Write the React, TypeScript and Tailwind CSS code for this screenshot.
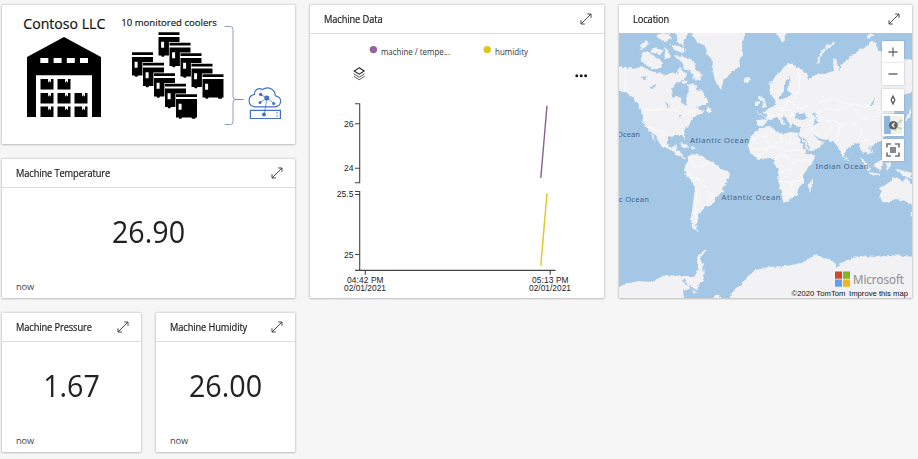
import type { ReactNode } from "react";

const uiFont = "font-['Open_Sans','Noto_Sans',sans-serif]";

function ExpandIcon() {
  return (
    <svg className="h-3 w-3 shrink-0" viewBox="0 0 12 12" fill="none" stroke="#333" strokeWidth="0.9">
      <path d="M1.2 10.8 10.8 1.2M7.2 1h3.8v3.8M1 7.2V11h3.8" />
    </svg>
  );
}

function Card({ title, className, children }: { title?: string; className: string; children: ReactNode }) {
  return (
    <section className={`flex shrink-0 flex-col overflow-hidden rounded-[1px] bg-white shadow-[0_0_2px_1px_rgba(0,0,0,0.13),0_1px_2px_rgba(0,0,0,0.12)] ${className}`}>
      {title && (
        <header className="flex h-[29px] shrink-0 items-center justify-between border-b border-[#dedede] pr-[12px] pl-[14px]">
          <h2 className="w-0 origin-left scale-x-[0.885] pt-[2px] text-[10.5px] font-normal tracking-[-0.12px] whitespace-nowrap text-[#1c1c1c] [-webkit-text-stroke:0.2px_#1c1c1c]">{title}</h2>
          <ExpandIcon />
        </header>
      )}
      {children}
    </section>
  );
}

function Metric({ title, value, className }: { title: string; value: string; className: string }) {
  return (
    <Card title={title} className={className}>
      <div className="flex flex-1 flex-col">
        <div className="flex h-[87px] scale-x-[0.925] items-center justify-center text-[31px] leading-none text-[#222]">{value}</div>
        <div className="pt-[5px] pl-[14px] text-[9.3px] leading-[14px] tracking-[-0.1px] text-[#444]">now</div>
      </div>
    </Card>
  );
}

const rearCoolers = [[158.5, 32], [169.5, 42.5], [180.5, 53], [191.5, 63.5], [202.5, 74]];
const frontCoolers = [[132, 52], [143, 62.5], [154, 73], [165, 83.5], [176, 94]];

function Cooler({ x, y }: { x: number; y: number }) {
  return (
    <g transform={`translate(${x} ${y})`}>
      <path d="M-.6-.6h22.2v5H22V24H-.6z" fill="#fff" />
      <path d="M0 .3h21v2.6H0zM0 5h21v18.5h-1.2l-.7 1.2h-3l-.7-1.2H6l-.7 1.2h-2l-.7-1.2H0z" fill="#000" />
      <path d="M2.6 9.7h3v6h-3z" fill="#fff" />
    </g>
  );
}

const boxes = [[40.5, 79], [57.5, 79], [40.5, 93], [57.5, 93], [74.5, 93], [40.5, 106.5], [57.5, 106.5], [74.5, 106.5]];

function SiteDiagram() {
  return (
    <svg className="h-[139px] w-[293px]" viewBox="2 5 293 139">
      <text x="23.3" y="28.7" fontSize="14" textLength="82" lengthAdjust="spacingAndGlyphs" fill="#111" stroke="#111" strokeWidth=".2">Contoso LLC</text>
      <text x="121.3" y="25.8" fontSize="9.8" textLength="95.5" lengthAdjust="spacingAndGlyphs" fill="#111" stroke="#111" strokeWidth=".15">10 monitored coolers</text>
      <path d="M27 57 64 37l37 20v60h-9V75.2H36V117h-9z" fill="#000" />
      <path d="M40.3 58h8v5h-8zm13.3 0h8v5h-8zm13.2 0h8v5h-8zm13.2 0h8v5h-8z" fill="#fff" />
      {boxes.map(([x, y]) => (
        <path key={`${x}-${y}`} transform={`translate(${x} ${y})`} d="M0 0h7.6v3.3h1V2.3h1v1h.9V0H13v10.4H0z" fill="#000" />
      ))}
      {rearCoolers.map(([x, y]) => <Cooler key={x} x={x} y={y} />)}
      {frontCoolers.map(([x, y]) => <Cooler key={x} x={x} y={y} />)}
      <path d="M224.5 26.5h6q2.5 0 2.5 2.5v67.5q0 3 2.5 3h8h-8q-2.5 0-2.5 3V122q0 2.5-2.5 2.5h-6" fill="none" stroke="#6f86c4" strokeWidth=".8" />
      <g fill="none" stroke="#4472c4" strokeWidth="1.2">
        <path d="M255 106.8h19.5c7.5 0 8.5-10 .8-11 0-6-7-10.5-12.8-6.2-4.500-2.500-8.200.8-8.200 4.800-7 1.500-7 11.900.7 12.400z" />
        <path d="M250.400 110.300h30v8.200h-30z" />
        <path d="m260.500 94.500 6.500 3.500 7 5.500M260 102.500l7-4.500-2.800 16.500" strokeWidth=".7" />
      </g>
      <g fill="#4472c4">
        <circle cx="266.800" cy="98" r="2.500" />
        <circle cx="260.700" cy="94.500" r="1.700" />
        <circle cx="260" cy="102.500" r="1.500" />
        <circle cx="273.700" cy="103.500" r="1.600" />
        <circle cx="264" cy="114.500" r="2" />
        <path d="M276.500 112.300h1.200v1.200h-1.200zm0 3h1.200v1.200h-1.200z" />
      </g>
    </svg>
  );
}

function MachineChart() {
  return (
    <svg className="h-[264px] w-[294px]" viewBox="310 34 294 264">
      <circle cx="373.400" cy="49.600" r="3.700" fill="#93639a" />
      <circle cx="487.200" cy="49.600" r="3.700" fill="#dfc51e" />
      <g fontSize="8.300" fill="#333">
        <text x="381" y="54.500" textLength="69" lengthAdjust="spacingAndGlyphs">machine / tempe...</text>
        <text x="495" y="54.500" textLength="33" lengthAdjust="spacingAndGlyphs">humidity</text>
      </g>
      <g fill="none" stroke="#222" strokeWidth="1.100">
        <path d="m359.200 67.800 5 3.200-5 3.200-5-3.200z" />
        <path d="m353.800 73.800 5.400 3.400 5.400-3.400M353.800 76.300l5.400 3.400 5.400-3.400" strokeWidth=".75" />
      </g>
      <g fill="#1a1a1a"><circle cx="576.800" cy="75.700" r="1.500" /><circle cx="581.200" cy="75.700" r="1.500" /><circle cx="585.600" cy="75.700" r="1.500" /></g>
      <path d="M355 103.700h4.700v79H355M355 123.700h4.700M355 168.200h4.700M355 191.500h4.700v78.800M355 194.500h4.700M355 254.500h4.700M355 270.400h200.500M365.300 270.400v4.300M550.200 270.400v4.300" fill="none" stroke="#444" strokeWidth="1.100" />
      <path d="m540.800 178 6.200-72.300" stroke="#876090" strokeWidth="1.400" />
      <path d="m540.800 265.500 6.200-72.300" stroke="#dfc92d" strokeWidth="1.500" />
      <g fontFamily="Liberation Sans, sans-serif" fontSize="8.600" fill="#222" textAnchor="end">
        <text x="353.500" y="127">26</text>
        <text x="353.500" y="171.400">24</text>
        <text x="353.500" y="197.300">25.5</text>
        <text x="353.500" y="257.500">25</text>
      </g>
      <g fontFamily="Liberation Sans, sans-serif" fontSize="8.400" fill="#222" textAnchor="middle">
        <text x="365.300" y="283" textLength="36.500">04:42 PM</text>
        <text x="365" y="291.400" textLength="42">02/01/2021</text>
        <text x="550.300" y="283" textLength="36.500">05:13 PM</text>
        <text x="550" y="291.400" textLength="42">02/01/2021</text>
      </g>
    </svg>
  );
}

const continents = [
  // North and Central America
  "M615 66 625 67 635 69 642 66 648 70 658 73 667 75 671 72 677 74 680 65 682 71 687 74 685 79 677 83 671 90 672 96 681 98 684 106 687 103 686 97 689 90 688 83 695 85 698 91 702 90 705 97 709 102 703 106 696 107 700 110 705 111 698 115 692 119 689 125 684 131 686 140 682 135 673 135 668 138 668 146 671 148 677 144 676 150 680 152 682 157 687 157 683 159 677 154 670 150 662 147 657 139 648 128 643 122 641 110 638 103 628 94 615 89z",
  // Baja California
  "M651 133 655 139 656 142 652 137z",
  // Greenland
  "M689 29 692 34 697 42 704 45 708 55 713 61 712 68 715 80 718 86 721 89 724 79 732 72 740 66 739 60 743 55 742 46 746 29z",
  // Iceland
  "M743 78 749 77 751 80 747 83 744 82z",
  // Canadian Arctic
  "M641 54 647 51 653 55 658 59 663 63 661 69 653 69 647 66 641 62z",
  "M640 45 646 40 649 43 646 48 641 50z",
  "M651 49 657 47 663 51 660 54 653 53z",
  "M664 48 669 50 670 58 665 59z",
  "M656 36 662 33 670 34 671 39 665 42 661 40z",
  "M670 44 678 46 686 49 683 52 674 50z",
  "M675 29 690 29 685 39 683 46 677 43z",
  "M674 55 685 57 694 62 696 69 702 75 700 81 694 79 691 72 684 68 682 62 676 59z",
  "M681 82 686 80 687 83 683 84z",
  "M708 106 712 112 706 112z",
  // Caribbean
  "M679 143 687 145 690 148 684 147z", "M691 147 697 149 692 150z",
  // South America
  "M687 158 693 154 703 156 713 162 718 167 730 173 729 178 724 185 723 192 715 198 712 205 705 207 702 212 698 215 698 220 695 225 699 232 692 228 691 218 693 203 695 187 688 178 684 170 687 163z",
  // Africa
  "M760 128 772 127 776 131 783 134 790 132 798 133 799 139 805 150 808 154 816 154 813 162 803 175 804 183 798 188 797 195 787 202 783 201 780 187 778 180 779 172 774 163 774 158 768 158 758 160 750 152 748 145 752 135z",
  "M813 179 813 183 810 192 808 188 809 184z",
  // Eurasia
  "M757 120 757 126 763 126 768 120 774 118 778 117 784 126 786 124 781 117 784 116 789 123 790 128 793 123 797 127 801 126 799 134 808 153 818 148 824 142 818 140 813 134 820 139 833 141 838 147 843 158 846 151 852 145 858 143 862 153 865 150 869 156 871 152 869 147 873 145 882 140 887 131 886 124 882 120 889 118 893 124 896 122 892 115 900 104 902 96 916 91 916 60 898 59 885 53 878 50 876 44 872 40 868 45 855 53 847 60 842 64 839 71 836 58 833 58 834 71 827 73 815 75 808 80 807 73 798 67 788 63 778 73 770 83 770 94 774 96 776 104 771 107 763 112 767 115 766 119z",
  "M760 94 764 99 767 107 762 108 763 103 759 99z", "M755 102 759 101 758 106 755 106z",
  "M776 29 789 29 783 42 780 40z", "M866 35 872 33 874 36 868 38z",
  "M846 157 848 161 845 160z",
  // South-east Asia and Australia
  "M860 157 864 160 871 169 869 171 864 165z", "M869 172 880 174 880 176 870 174z",
  "M874 164 881 160 884 163 880 170 875 168z", "M886 163 891 162 888 171z",
  "M894 168 901 170 911 174 912 179 904 176z",
  "M879 188 888 184 894 177 900 179 902 184 906 177 911 184 916 190 916 207 905 201 896 199 883 203 879 198 881 192z",
  "M909 211 914 213 911 217z",
  // Japan
  "M908 113 911 108 910 117 905 121z",
  // Antarctica
  "M615 288 625 284 638 281 652 282 657 279 665 275 682 276 695 276 698 269 697 258 703 251 708 248 700 258 703 265 704 278 699 285 696 294 691 288 683 291 685 303 615 303z",
  "M709 303 718 293 724 303z",
  "M726 303 735 289 742 283 755 270 770 267 785 266 802 263 817 254 823 258 833 260 836 268 842 262 858 256 878 257 889 255 916 257 916 303z",
];

const inlandWater = [
  "M795 119 796 113 800 114 804 113 808 118 803 120z",
  "M812 114 817 113 815 117 818 124 814 124 815 118z",
  "M784 91 784 84 790 76 789 83 787 90 791 93 788 97 779 100 781 95z",
  "M799 134 810 155 807 154z",
  "M640 77 648 76 645 80z", "M649 87 656 85 653 88z", "M665 101 668 104 669 108 667 106z", "M679 116 681 113 680 119z",
  "M870 105 875 98 873 105z", "M831 106 835 101 832 105z",
];

const borders = [
  "M625 67V91M641 110H675L684 115 696 110M648 128 659 130 667 136M663 147 670 143M690 157 693 167 702 166 710 163M684 174 697 177 705 187 712 193 707 203M697 190 695 212 698 228",
  "M751 142 760 135 772 146 781 141 793 143 799 140M750 150 764 149 772 146 785 151 796 150 805 153M760 157 768 149M774 160 782 155 793 161 805 160 811 163M779 171 791 171 793 163 804 174M779 181 791 183 804 179M782 194 793 195 791 183 800 177M781 132V143M790 133V145M770 130 765 139",
  "M757 112 766 117 778 114 784 118 793 115 790 109 780 111 773 104M784 104 791 101 799 109 809 106 816 113 826 109 837 110 847 106 858 111 871 105 881 110 893 103M778 109 785 107 790 99M790 66 800 76 799 91 794 97M809 121 821 123 833 120 841 126 850 120 862 131 857 142M822 117 831 127 825 139M808 124 818 136M841 127 836 140M851 108 864 119 877 116 889 107M818 103 833 99 849 104 869 106M862 137 870 143 873 153",
];

function WorldMap() {
  return (
    <svg className="h-[265px] w-[293px]" viewBox="619 33 293 265">
      <defs>
        <filter id="coast" x="611" y="25" width="309" height="281" filterUnits="userSpaceOnUse" colorInterpolationFilters="sRGB">
          <feTurbulence type="fractalNoise" baseFrequency="0.24" numOctaves="2" seed="7" result="noise" />
          <feDisplacementMap in="SourceGraphic" in2="noise" scale="4" xChannelSelector="R" yChannelSelector="G" />
        </filter>
      </defs>
      <rect x="619" y="33" width="293" height="265" fill="#a5c7e6" />
      <g filter="url(#coast)">
        {continents.map((d) => <path key={d} d={d} fill="#f2f2f4" />)}
        {borders.map((d) => <path key={d} d={d} fill="none" stroke="#fff" strokeWidth=".7" />)}
        {inlandWater.map((d) => <path key={d} d={d} fill="#a5c7e6" />)}
        <path d="M818.500 63.500q-1-6 3-10t6-7l6-3" fill="none" stroke="#f2f2f4" strokeWidth="2" />
        <path d="M804 137 811 153M683 280l4 5M689 286l8 6M695 262l-2 8M638 276l8 1" fill="none" stroke="#a5c7e6" strokeWidth="1.500" />
      </g>
      <g fontFamily="Noto Sans, Open Sans, sans-serif" fontSize="7.600" fill="#42638b">
        <text x="617" y="136.700" textLength="23">Ocean</text>
        <text x="619" y="201.500" textLength="30">c Ocean</text>
        <text x="690" y="143.200" textLength="59">Atlantic Ocean</text>
        <text x="721.500" y="199.800" textLength="59">Atlantic Ocean</text>
        <text x="815.500" y="168.700" textLength="53">Indian Ocean</text>
      </g>
      <path d="M835 271.500h7v7.200h-7z" fill="#cf4b27" />
      <path d="M843 271.500h7v7.200h-7z" fill="#84b522" />
      <path d="M835 279.600h7v7.200h-7z" fill="#659eea" />
      <path d="M843 279.600h7v7.200h-7z" fill="#f2b51e" />
      <text x="853" y="284.200" fontSize="12.800" textLength="51" lengthAdjust="spacingAndGlyphs" fill="#929292" stroke="#929292" strokeWidth=".2">Microsoft</text>
      <g fontFamily="Liberation Sans, sans-serif" fontSize="7.700" fill="#111">
        <text x="791.500" y="296.300" textLength="54">©2020 TomTom</text>
        <text x="849" y="296.300" textLength="59">Improve this map</text>
      </g>
    </svg>
  );
}

function MapButton({ label, children, className = "" }: { label: string; children: ReactNode; className?: string }) {
  return (
    <button aria-label={label} className={`flex h-[22px] w-[22px] items-center justify-center bg-white shadow-[0_0_2px_rgba(0,0,0,0.25)] ${className}`}>
      {children}
    </button>
  );
}

function MapControls() {
  return (
    <div className="absolute top-[8px] right-[8px] flex flex-col">
      <MapButton label="Zoom in"><svg viewBox="0 0 22 22" className="h-[22px] w-[22px]"><path d="M6.500 11h9M11 6.500v9" stroke="#6b6b6b" strokeWidth="1.300" /></svg></MapButton>
      <MapButton label="Zoom out"><svg viewBox="0 0 22 22" className="h-[22px] w-[22px]"><path d="M6.500 11h9" stroke="#6b6b6b" strokeWidth="1.300" /></svg></MapButton>
      <MapButton label="Pitch" className="mt-[4px]">
        <svg viewBox="0 0 22 22" className="h-[22px] w-[22px]"><path fillRule="evenodd" d="m11 5.500 2.600 5.500-2.600 5.500L8.400 11zM11 9.600a1.100 1.400 0 1 0 .01 0z" fill="#606060" /></svg>
      </MapButton>
      <MapButton label="Style" className="mt-[3px]">
        <svg viewBox="0 0 22 22" className="h-[22px] w-[22px]">
          <path d="M2 2h18v18H2z" fill="#f1f1ed" /><path d="M2 2h6l1 18H2z" fill="#8db7dc" />
          <path d="m13 17 3-8 4-3M13 12l7 3" fill="none" stroke="#b9dca3" strokeWidth="1.700" />
          <circle cx="11.300" cy="11.200" r="4.300" fill="#5f6064" /><path d="m12.500 9-2.300 2.200 2.300 2.200" fill="none" stroke="#fff" strokeWidth="1.300" />
        </svg>
      </MapButton>
      <MapButton label="Fullscreen" className="mt-[3px]">
        <svg viewBox="0 0 22 22" className="h-[22px] w-[22px]"><path d="M5 8.500V5h4M13 5h4v3.500M17 13.500V17h-4M9 17H5v-3.500" fill="none" stroke="#777" strokeWidth="1.700" /><path d="M8 8h6v6H8z" fill="#888" /></svg>
      </MapButton>
    </div>
  );
}

export default function App() {
  return (
    <main className={`flex h-[459px] w-[918px] items-start gap-[15px] overflow-hidden bg-[#f6f6f6] pt-[5px] pl-[2px] ${uiFont}`}>
      <div className="flex w-[293px] shrink-0 flex-col gap-[15px]">
        <Card className="h-[139px] w-[293px]"><SiteDiagram /></Card>
        <Metric title="Machine Temperature" value="26.90" className="h-[139px] w-[293px]" />
        <div className="flex gap-[15px]">
          <Metric title="Machine Pressure" value="1.67" className="h-[139px] w-[139px]" />
          <Metric title="Machine Humidity" value="26.00" className="h-[139px] w-[139px]" />
        </div>
      </div>
      <Card title="Machine Data" className="h-[293px] w-[294px]"><MachineChart /></Card>
      <Card title="Location" className="h-[293px] w-[293px]">
        <div className="relative -mt-px h-[265px]"><WorldMap /><MapControls /></div>
      </Card>
    </main>
  );
}
